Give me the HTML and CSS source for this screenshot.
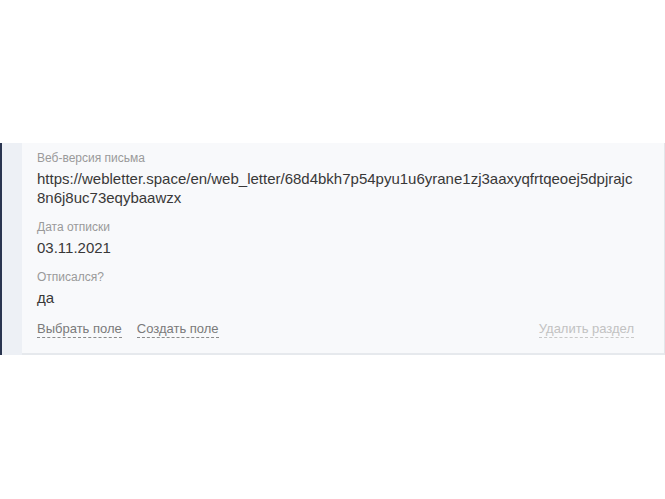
FILE: index.html
```html
<!DOCTYPE html>
<html lang="ru">
<head>
  <meta charset="UTF-8">
  <title>Раздел письма</title>
  <link rel="stylesheet" href="styles.css">
</head>
<body>
<div class="page">
  <div class="section">
    <div class="section-side"></div>
    <div class="card">
      <div class="field">
        <div class="field-label">Веб-версия письма</div>
        <div class="field-value">https://webletter.space/en/web_letter/68d4bkh7p54pyu1u6yrane1zj3aaxyqfrtqeoej5dpjrajc8n6j8uc73eqybaawzx</div>
      </div>
      <div class="field">
        <div class="field-label">Дата отписки</div>
        <div class="field-value">03.11.2021</div>
      </div>
      <div class="field">
        <div class="field-label">Отписался?</div>
        <div class="field-value">да</div>
      </div>
      <div class="actions">
        <a class="link">Выбрать поле</a>
        <a class="link">Создать поле</a>
        <a class="link link-muted">Удалить раздел</a>
      </div>
    </div>
  </div>
</div>
</body>
</html>
```

FILE: styles.css
```css
body{margin:0;background:#fff;font-family:"Liberation Sans",Arial,sans-serif;color:#333;}
.page{padding-top:143px;}
.section{display:flex;height:212px;}
.section-side{width:20px;border-left:2px solid #2a3550;background:#edf0f5;}
.card{flex:1;background:#f8f9fb;border-right:1px solid #e3e6ea;border-bottom:2px solid #e6e9ed;padding:7px 30px 0 15px;}
.field{margin-bottom:12px;}
.field-label{font-size:12px;line-height:16px;color:#9a9a9a;}
.field-value{font-size:15px;line-height:19px;color:#383838;margin-top:3px;word-break:break-all;}
.actions{display:flex;gap:15px;margin-top:14px;}
.link{font-size:13px;line-height:16px;color:#7a7a7a;border-bottom:1px dashed #8a8a8a;cursor:pointer;}
.link-muted{margin-left:auto;color:#c2c2c2;border-bottom-color:#c8c8c8;}
```
